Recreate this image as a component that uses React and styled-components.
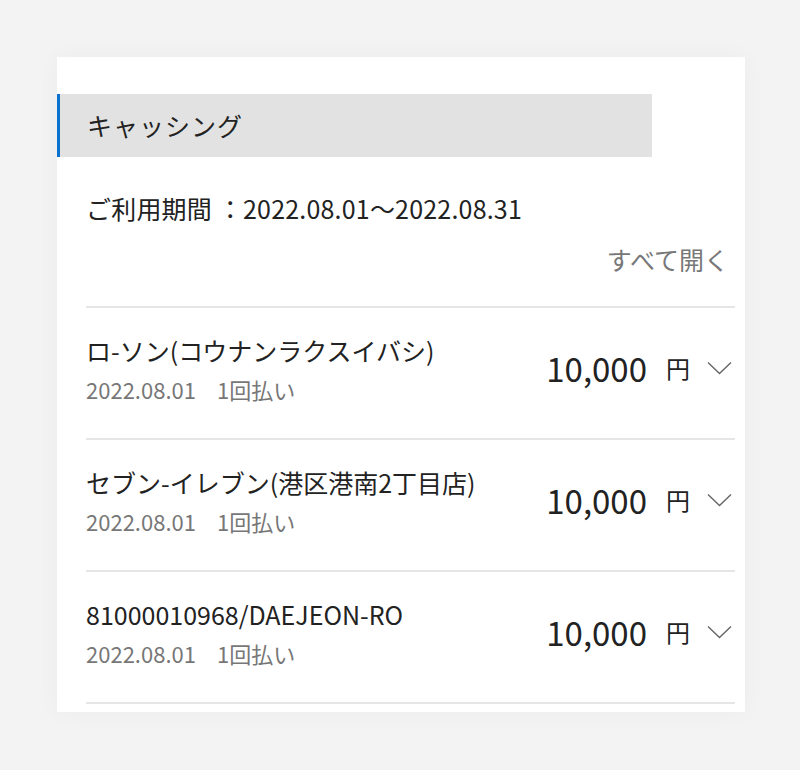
import React from "react";
import styled, { createGlobalStyle } from "styled-components";

const Global = createGlobalStyle`
  html, body { margin: 0; padding: 0; background: #f3f3f3; }
  body { font-family: "Noto Sans CJK JP", "Noto Sans", sans-serif; color: #222; }
`;

const Page = styled.div`
  padding: 57px 55px 58px 57px;
`;

const Card = styled.section`
  background: #fff;
  width: 688px;
  padding: 37px 0 8px;
  box-shadow: 0 0 24px rgba(0, 0, 0, 0.03);
`;

const Heading = styled.h2`
  margin: 0 93px 0 0;
  height: 63px;
  line-height: 63px;
  background: #e2e2e2;
  border-left: 3px solid #0b72d0;
  padding-left: 27px;
  font-size: 25px;
  font-weight: 400;
  letter-spacing: 1px;
  color: #222;
`;

const Body = styled.div`
  padding: 0 10px 0 29px;
`;

const Period = styled.p`
  margin: 34px 0 0;
  font-size: 25px;
  line-height: 34px;
  letter-spacing: 0.2px;
  color: #222;
`;

const OpenAll = styled.div`
  margin-top: 17px;
  text-align: right;
  padding-right: 6px;
  font-size: 25px;
  line-height: 34px;
  color: #777;
`;

const List = styled.ul`
  list-style: none;
  margin: 30px 0 0;
  padding: 0;
  border-top: 2px solid #e6e6e6;
`;

const Row = styled.li`
  display: flex;
  align-items: center;
  justify-content: space-between;
  padding: 25px 0 34px;
  border-bottom: 2px solid #e6e6e6;
`;

const Info = styled.div`
  display: flex;
  flex-direction: column;
  gap: 7px;
`;

const Name = styled.div`
  font-size: 25px;
  line-height: 34px;
  color: #222;
`;

const Sub = styled.div`
  display: flex;
  gap: 21px;
  font-size: 22px;
  line-height: 30px;
  color: #777;
`;

const Amount = styled.div`
  display: flex;
  align-items: center;
  margin: -2px 3px 0 0;
`;

const Value = styled.span`
  font-size: 33px;
  line-height: 40px;
  color: #222;
`;

const Yen = styled.span`
  font-size: 24px;
  margin-left: 19px;
  color: #222;
`;

const Chevron = styled.svg`
  margin-left: 17px;
  width: 25px;
  height: 14px;
`;

const items = [
  { name: "ロ-ソン(コウナンラクスイバシ)" },
  { name: "セブン-イレブン(港区港南2丁目店)" },
  { name: "81000010968/DAEJEON-RO" },
];

export default function App() {
  return (
    <>
      <Global />
      <Page>
        <Card>
          <Heading>キャッシング</Heading>
          <Body>
            <Period>ご利用期間 ：2022.08.01～2022.08.31</Period>
            <OpenAll>すべて開く</OpenAll>
            <List>
              {items.map((it) => (
                <Row key={it.name}>
                  <Info>
                    <Name>{it.name}</Name>
                    <Sub>
                      <span>2022.08.01</span>
                      <span>1回払い</span>
                    </Sub>
                  </Info>
                  <Amount>
                    <Value>10,000</Value>
                    <Yen>円</Yen>
                    <Chevron viewBox="0 0 25 14" fill="none">
                      <path d="M1 1.5 L12.5 12.5 L24 1.5" stroke="#666" strokeWidth="1.4" />
                    </Chevron>
                  </Amount>
                </Row>
              ))}
            </List>
          </Body>
        </Card>
      </Page>
    </>
  );
}
